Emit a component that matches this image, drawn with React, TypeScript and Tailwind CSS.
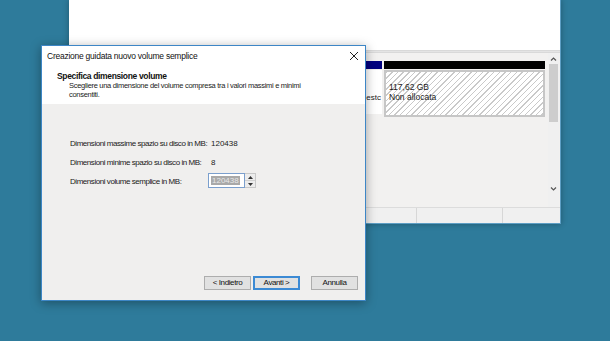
import React from 'react'

const font = { fontFamily: '"Liberation Sans", Arial, sans-serif' }

function DiskManager() {
  return (
    <div className="absolute left-[69px] top-0 w-[492px] h-[224px] bg-white border-r border-b border-[#5d9ec4] shadow-[0_0_6px_rgba(0,0,0,0.3)] flex flex-col">
      {/* volume list (empty area) */}
      <div className="h-[50px] bg-white" />
      <div className="h-[3px] bg-[#e4e4e4] border-y border-[#d9d9d9]" />
      {/* graphical disk view */}
      <div className="flex-1 flex bg-[#f2f1f0]">
        <div className="flex-1 pt-[8px] flex gap-[2px] pl-[200px]">
          <div className="w-[113px] flex flex-col">
            <div className="h-[8px] bg-[#00007f]" />
            <div className="mt-[1px] h-[44px] bg-white overflow-hidden flex items-center justify-end pr-[1px]">
              <span className="text-[8px] text-[#222] mt-[12px] whitespace-nowrap">estc</span>
            </div>
          </div>
          <div className="w-[161px] flex flex-col">
            <div className="h-[8px] bg-black" />
            <div className="mt-[1px] h-[47px] border-2 border-[#c6c6c6] bg-[repeating-linear-gradient(135deg,#c9c9c9_0px,#c9c9c9_1px,#ffffff_1px,#ffffff_4px)] px-[3px] pt-[10px] text-[8.5px] leading-[10px] text-[#1a1a1a]">
              <div>117,62 GB</div>
              <div>Non allocata</div>
            </div>
          </div>
        </div>
        {/* scrollbar */}
        <div className="w-[11px] mr-[1px] flex flex-col items-center bg-[#f0f0f0]">
          <svg width="7" height="6" viewBox="0 0 7 6" className="mt-[3px]">
            <path d="M1 4.5 L3.5 2 L6 4.5" fill="none" stroke="#555" strokeWidth="1.2" />
          </svg>
          <div className="mt-[2px] w-[9px] h-[58px] bg-[#cdcdcd]" />
          <div className="flex-1" />
          <svg width="7" height="6" viewBox="0 0 7 6" className="mb-[15px]">
            <path d="M1 1.5 L3.5 4 L6 1.5" fill="none" stroke="#555" strokeWidth="1.2" />
          </svg>
        </div>
      </div>
      {/* status bar */}
      <div className="h-[16px] flex bg-[#f0f0f0] border-t border-[#dcdcdc]">
        <div className="w-[348px] border-r border-[#d7d7d7]" />
        <div className="w-[86px] border-r border-[#d7d7d7]" />
        <div className="flex-1" />
      </div>
    </div>
  )
}

function WinButton({ label, primary }: { label: string; primary?: boolean }) {
  return (
    <div
      className={`w-[47px] h-[14px] flex items-center justify-center text-[8px] tracking-[-0.4px] text-[#111] bg-[#e1e1e1] ${
        primary ? 'border-2 border-[#3c8ad4]' : 'border border-[#adadad]'
      }`}
    >
      {label}
    </div>
  )
}

function Wizard() {
  return (
    <div className="absolute left-[41px] top-[45px] w-[325px] h-[256px] bg-[#f0efee] border border-[#3d86c6] shadow-[0_2px_10px_rgba(0,0,0,0.35)] flex flex-col">
      {/* title bar + header */}
      <div className="bg-white h-[58px] flex flex-col">
        <div className="flex items-center justify-between h-[20px] pl-[5px] pr-[6px]">
          <span className="text-[8.5px] tracking-[-0.25px] text-[#111] mt-[1px]">Creazione guidata nuovo volume semplice</span>
          <svg width="10" height="10" viewBox="0 0 10 10">
            <path d="M1 1 L9 9 M9 1 L1 9" stroke="#222" strokeWidth="1" />
          </svg>
        </div>
        <div className="pl-[15px] pt-[5px]">
          <div className="text-[8.5px] font-bold tracking-[-0.35px] text-[#111] leading-[10px]">Specifica dimensione volume</div>
          <div className="pl-[12px] pt-[1px] text-[7.5px] tracking-[-0.3px] text-[#222] leading-[8.5px] w-[250px]">
            Scegliere una dimensione del volume compresa tra i valori massimi e minimi consentiti.
          </div>
        </div>
      </div>
      {/* body */}
      <div className="flex-1 flex flex-col pl-[28px] pt-[34px] text-[8px] tracking-[-0.45px] text-[#1a1a1a]">
        <div className="flex items-center h-[12px]">
          <span className="w-[141px] shrink-0 whitespace-nowrap">Dimensioni massime spazio su disco in MB:</span>
          <span className="tracking-[0]">120438</span>
        </div>
        <div className="flex items-center h-[12px] mt-[7px]">
          <span className="w-[141px] shrink-0 whitespace-nowrap">Dimensioni minime spazio su disco in MB:</span>
          <span className="tracking-[0]">8</span>
        </div>
        <div className="flex items-start mt-[4px]">
          <span className="w-[138px] shrink-0 whitespace-nowrap mt-[3px]">Dimensioni volume semplice in MB:</span>
          <div className="flex h-[15px]">
            <div className="w-[37px] border border-[#7b9fcd] bg-white flex items-center pl-[2px]">
              <span className="bg-[#a9a9a9] text-[#e8e8e8] text-[8px] leading-[9px] tracking-[0] px-[1px]">120438</span>
            </div>
            <div className="w-[11px] flex flex-col border border-l-0 border-[#c8c8c8] bg-[#ececec]">
              <div className="flex-1 flex items-center justify-center border-b border-[#d0d0d0]">
                <svg width="5" height="3" viewBox="0 0 5 3"><path d="M0 3 L2.5 0 L5 3 Z" fill="#333" /></svg>
              </div>
              <div className="flex-1 flex items-center justify-center">
                <svg width="5" height="3" viewBox="0 0 5 3"><path d="M0 0 L2.5 3 L5 0 Z" fill="#333" /></svg>
              </div>
            </div>
          </div>
        </div>
        <div className="flex-1" />
        <div className="flex justify-end pr-[7px] mb-[10px] gap-[2px]">
          <WinButton label="< Indietro" />
          <WinButton label="Avanti >" primary />
          <div className="w-[7px]" />
          <WinButton label="Annulla" />
        </div>
      </div>
    </div>
  )
}

export default function App() {
  return (
    <div className="relative w-[610px] h-[341px] overflow-hidden bg-[#2e7b9b]" style={font}>
      <DiskManager />
      <Wizard />
    </div>
  )
}
